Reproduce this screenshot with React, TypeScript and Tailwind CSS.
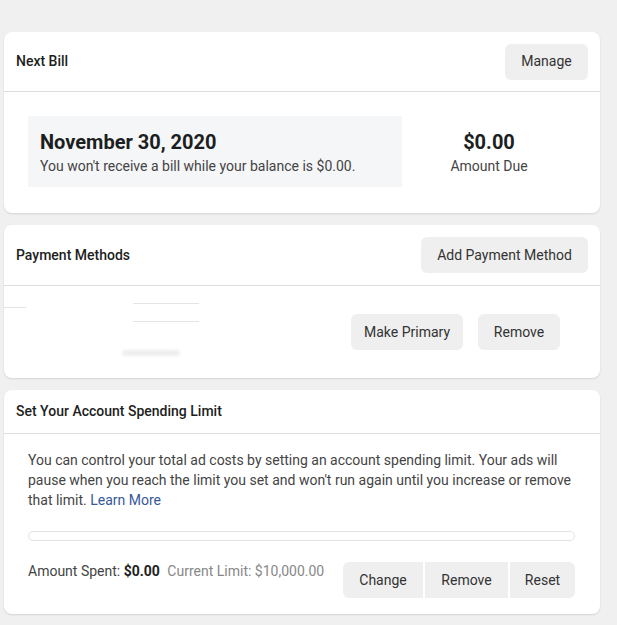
const font = { fontFamily: "Roboto, 'Liberation Sans', sans-serif" };

function Btn({ children, className = "" }: { children: React.ReactNode; className?: string }) {
  return (
    <button
      className={`h-9 whitespace-nowrap rounded-md bg-[#efefef] px-0 text-[14px] text-[#333] ${className}`}
    >
      {children}
    </button>
  );
}

function Card({ children, className = "" }: { children: React.ReactNode; className?: string }) {
  return (
    <div className={`rounded-lg bg-white shadow-[0_1px_2px_rgba(0,0,0,0.12)] ${className}`}>
      {children}
    </div>
  );
}

export default function App() {
  return (
    <div className="min-h-[625px] bg-[#f0f0f0] pl-1 pr-[17px] pt-8" style={font}>
      <div className="flex w-[596px] flex-col gap-3">
        {/* next bill */}
        <Card>
          <div className="flex h-[60px] items-center justify-between border-b border-[#dedede] pl-3 pr-3">
            <span className="text-[14px] font-medium text-[#1c1e21]">Next Bill</span>
            <Btn className="w-[83px]">Manage</Btn>
          </div>
          <div className="flex items-center px-6 pb-[26px] pt-6">
            <div className="flex h-[71px] w-[374px] flex-col justify-center bg-[#f5f6f7] px-3">
              <div className="text-[20px] font-bold leading-[28px] text-[#1c1e21]">November 30, 2020</div>
              <div className="text-[14px] leading-5 text-[#444]">
                You won't receive a bill while your balance is $0.00.
              </div>
            </div>
            <div className="flex flex-1 flex-col items-center">
              <div className="text-[20px] font-bold leading-[28px] text-[#1c1e21]">$0.00</div>
              <div className="text-[14px] leading-5 text-[#444]">Amount Due</div>
            </div>
          </div>
        </Card>

        {/* payment methods */}
        <Card>
          <div className="flex h-[61px] items-center justify-between border-b border-[#dedede] pl-3 pr-3">
            <span className="text-[14px] font-medium text-[#1c1e21]">Payment Methods</span>
            <Btn className="w-[167px]">Add Payment Method</Btn>
          </div>
          <div className="flex h-[92px] items-center justify-between pr-10">
            <div className="relative h-full w-[200px]">
              <div className="absolute left-0 top-[21px] h-px w-[22px] bg-[#e4e4e4]" />
              <div className="absolute left-[129px] top-[17px] h-px w-[66px] bg-[#e4e4e4]" />
              <div className="absolute left-[129px] top-[35px] h-px w-[66px] bg-[#e4e4e4]" />
              <div className="absolute left-[118px] top-[64px] h-[6px] w-[58px] rounded-full bg-[#eeeeee] blur-[1.5px]" />
            </div>
            <div className="flex gap-[15px]">
              <Btn className="w-[112px]">Make Primary</Btn>
              <Btn className="w-[82px]">Remove</Btn>
            </div>
          </div>
        </Card>

        {/* spending limit */}
        <Card>
          <div className="flex h-[44px] items-center border-b border-[#dedede] pl-3">
            <span className="text-[14px] font-medium text-[#1c1e21]">Set Your Account Spending Limit</span>
          </div>
          <div className="px-6 pb-4 pt-4">
            <p className="text-[14px] leading-5 text-[#444]">
              You can control your total ad costs by setting an account spending limit. Your ads will
              pause when you reach the limit you set and won't run again until you increase or remove
              that limit. <span className="text-[#385898]">Learn More</span>
            </p>
            <div className="mr-[1px] mt-[21px] h-[10px] rounded-full border border-[#e2e2e2]" />
            <div className="mt-[20px] flex items-start justify-between">
              <div className="text-[14px] text-[#444]">
                Amount Spent: <b className="text-[#1c1e21]">$0.00</b>{" "}
                <span className="ml-1 text-[#888]">Current Limit: $10,000.00</span>
              </div>
              <div className="mr-[1px] mt-[1px] flex gap-[2px]">
                <Btn className="w-[80px] rounded-r-none">Change</Btn>
                <Btn className="w-[83px] rounded-none">Remove</Btn>
                <Btn className="w-[65px] rounded-l-none">Reset</Btn>
              </div>
            </div>
          </div>
        </Card>
        <Card className="h-[20px]" />
      </div>
    </div>
  );
}
